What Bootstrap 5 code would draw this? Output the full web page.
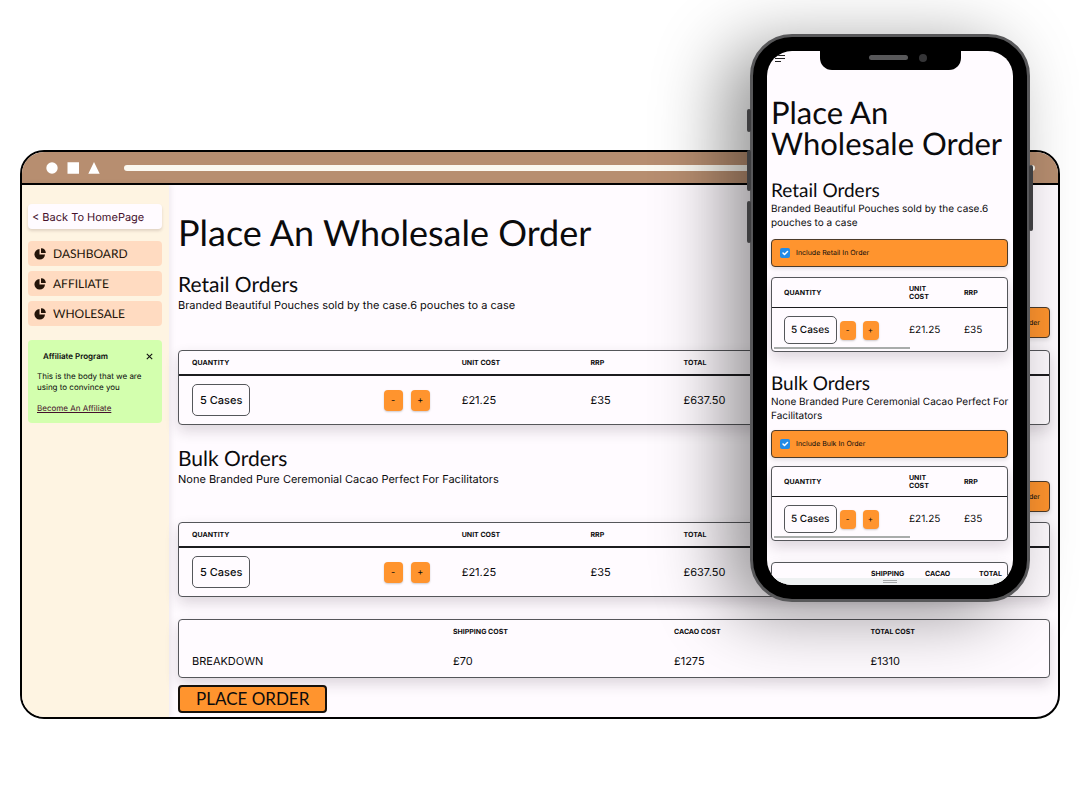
<!DOCTYPE html>
<html lang="en">
<head>
<meta charset="utf-8">
<meta name="viewport" content="width=device-width, initial-scale=1">
<title>Place An Wholesale Order</title>
<link href="https://cdn.jsdelivr.net/npm/bootstrap@5.3.0/dist/css/bootstrap.min.css" rel="stylesheet">
<script src="https://cdn.jsdelivr.net/npm/bootstrap@5.3.0/dist/js/bootstrap.bundle.min.js" defer></script>
<style>
:root{--ink:#0b0b0d;--orange:#ff942e;--paper:#fffbff;--rule:#55565a}
body{background:#fff;color:var(--ink);font-family:Inter,"Liberation Sans",sans-serif;font-size:11px;line-height:16px;text-rendering:geometricPrecision}
.stage{padding:150px 20px 80px;overflow:hidden}
h1,h2,.display-face{font-family:Lato,"Liberation Sans",sans-serif;font-weight:400;margin:0}
button{color:inherit}

/* browser window */
.browser{border:2px solid #000;border-radius:24px;overflow:hidden;background:var(--paper)}
.chrome-bar{background:#b78e70;border-bottom:2px solid #000;height:33px;padding:0 23px 0 24px}
.address{height:6px;border-radius:3px;background:#fbf8f0;margin-left:23px}
.side{width:147px;flex:none;background:#fef4e2;padding:19px 7px 20px 6px;box-shadow:1px 0 6px rgba(60,40,60,.1)}
.side a{color:#24150a;text-decoration:none}
.back{height:25px;padding:0 4px;background:var(--paper);border-radius:4px;box-shadow:0 2px 3px rgba(60,30,30,.15);margin-bottom:12px}
.side .back,.side .join{color:#45102c}
.menu-list{gap:5px}
.menu-link{height:25px;padding:0 6px;gap:7px;background:#ffdbc1;border-radius:4px;font-size:12px}
.promo{background:#d3ffae;border-radius:4px;margin-top:14px;padding:11px 9px 9px;font-size:8px;line-height:11px}
.promo-head{padding-left:6px;margin-bottom:9px}
.promo p{margin-bottom:10px}
.side .join{text-decoration:underline}
.close-x{border:0;background:none;padding:0;line-height:0}
.work{padding:29px 8px 4px 9px;min-width:0}
.work h1{font-size:36px;line-height:36px;margin-bottom:23px}
h2{font-size:21px;line-height:24px}
.include{background:var(--orange);border:1px solid #4b3b2b;border-radius:4px;font-size:7px;line-height:10px;height:31px;padding:0 9px 0 8px;gap:6px;box-shadow:0 2px 4px rgba(0,0,0,.12)}
.include .form-check-input{width:10px;height:10px;margin:0;border:0;border-radius:2px}
.include .form-check-input:checked{background-color:#228be6}
.work .include{margin-top:34px;margin-bottom:10px}

/* tables */
.sheet{border:1px solid var(--rule);border-radius:4px;background:var(--paper);box-shadow:0 6px 14px rgba(40,20,40,.16);overflow:hidden}
.sheet table{width:100%;table-layout:fixed;margin:0}
.sheet th,.sheet td{padding:0 0 0 13px;vertical-align:middle}
.sheet th{font-size:7px;line-height:8px;font-weight:700;height:24px}
.sheet td{height:49px}
.ruled thead th{border-bottom:2px solid #1c1c1f}
.c-qty{width:31%}.c-unit{width:14.8%}.c-rrp{width:10.7%}
.cases{border:1px solid var(--rule);border-radius:5px;padding:7px;font-weight:500;line-height:16px}
.step{border:0;border-radius:4px;background:var(--orange);width:19px;height:21px;padding:0;font-size:9px;line-height:20px;box-shadow:0 1px 2px rgba(0,0,0,.2)}
.steps{gap:8px;margin-right:19px}
.costs th{height:24px}.costs td{height:33px}
.c-name{width:30%}.c-ship{width:25.4%}.c-cacao{width:22.6%}
.place{border:2px solid #17110b;border-radius:4px;background:var(--orange);font-size:17px;line-height:24px;padding:0 16px;margin-top:7px}

/* phone lying over the window */
.phone{position:absolute;top:34px;right:50px;width:280px;border:3px solid #58585a;border-radius:42px;background:#000;padding:14px;box-shadow:-25px 12px 70px rgba(0,0,0,.42)}
.key{position:absolute;width:4px;background:#3e3e40;border-radius:2px}
.screen{position:relative;background:var(--paper);height:534px;border-radius:25px;overflow:hidden;padding:0 5px 0 4px;font-size:10px;line-height:14px}
.notch{position:absolute;top:-1px;left:53px;right:52px;height:20px;background:#000;border-radius:0 0 12px 12px;gap:11px;padding:0 7px 5px 21px}
.speaker{width:39px;height:5px;border-radius:3px;background:#58585a}
.lens{width:8px;height:8px;border-radius:50%;background:#353537}
.burger{position:absolute;top:3px;left:7px;border:0;background:none;padding:0;line-height:0}
.screen h1{font-size:31px;line-height:31px;padding-top:46px;margin-bottom:20px;white-space:nowrap}
.screen h2{font-size:19px;line-height:23px}
.screen .include{height:28px;margin:9px 0 10px}
.screen .include.snug{margin:7px 0 8px}
.screen .sheet{position:relative}
.screen .sheet th{height:29px;padding:2px 0 0 12px}
.screen .sheet td{height:44px;padding:2px 0 0 12px}
.screen .ruled th{border-bottom-width:1px}
.screen .m-costs th{height:20px}
.m-qty{width:125px}.m-unit{width:55px}
.m-name{width:37%}.m-part{width:23%}
.screen .cases{padding:6px;line-height:14px}
.screen .steps{margin-left:3px;gap:7px}
.screen .step{width:16px;height:19px;font-size:8px;line-height:18px}
.scroll-thumb{position:absolute;left:2px;bottom:2px;width:58%;height:2px;background:#a9acab}
.home-strip{position:absolute;left:0;right:0;bottom:0;height:7px;background:#eef1f2}
.home-strip span{width:14px;height:3px;border:solid #a4a7a8;border-width:1px 0}
</style>
</head>
<body>
<div class="stage position-relative">
  <div class="browser">
    <div class="chrome-bar d-flex align-items-center">
      <svg width="55" height="12" viewBox="0 0 55 12" fill="#fff" aria-hidden="true"><circle cx="6" cy="6" r="5.700"/><path d="M21.500.3H33v11.500H21.500zM48 0l5.700 11.700H42.300z"/></svg>
      <div class="address flex-grow-1"></div>
    </div>
    <div class="d-flex">
      <nav class="side">
        <a href="#" class="back d-flex align-items-center">&lt; Back To HomePage</a>
        <div class="menu-list d-grid">
          <a href="#" class="menu-link display-face d-flex align-items-center"><svg width="12" height="12" viewBox="0 0 12 12" fill="#24150a" aria-hidden="true"><path d="M5.500 1v5.500H11A5.300 5.300 0 1 1 5.500 1z"/><path d="M7 .2A5 5 0 0 1 11.800 5H7z"/></svg>DASHBOARD</a>
          <a href="#" class="menu-link display-face d-flex align-items-center"><svg width="12" height="12" viewBox="0 0 12 12" fill="#24150a" aria-hidden="true"><path d="M5.500 1v5.500H11A5.300 5.300 0 1 1 5.500 1z"/><path d="M7 .2A5 5 0 0 1 11.800 5H7z"/></svg>AFFILIATE</a>
          <a href="#" class="menu-link display-face d-flex align-items-center"><svg width="12" height="12" viewBox="0 0 12 12" fill="#24150a" aria-hidden="true"><path d="M5.500 1v5.500H11A5.300 5.300 0 1 1 5.500 1z"/><path d="M7 .2A5 5 0 0 1 11.800 5H7z"/></svg>WHOLESALE</a>
        </div>
        <div class="promo">
          <div class="promo-head d-flex justify-content-between align-items-center"><span class="fw-semibold">Affiliate Program</span><button class="close-x" type="button" aria-label="Close"><svg width="7" height="7" viewBox="0 0 7 7" stroke="#111" stroke-width="1.100"><path d="M.8.800l5.400 5.400M6.200.800L.8 6.200"/></svg></button></div>
          <p>This is the body that we are using to convince you</p>
          <a href="#" class="join">Become An Affiliate</a>
        </div>
      </nav>
      <main class="work flex-grow-1">
        <h1>Place An Wholesale Order</h1>
        <section>
          <div class="d-flex justify-content-between">
            <div><h2>Retail Orders</h2><p class="mb-0">Branded Beautiful Pouches sold by the case.6 pouches to a case</p></div>
            <label class="include d-flex align-items-center"><input class="form-check-input" type="checkbox" checked>Include Retail In Order</label>
          </div>
          <div class="sheet ruled" style="margin-top:2px">
            <table>
              <thead><tr><th class="c-qty">QUANTITY</th><th class="c-unit">UNIT COST</th><th class="c-rrp">RRP</th><th>TOTAL</th></tr></thead>
              <tbody><tr><td><div class="d-flex align-items-center"><span class="cases">5 Cases</span><div class="steps d-flex ms-auto"><button type="button" class="step">-</button><button type="button" class="step">+</button></div></div></td><td>£21.25</td><td>£35</td><td>£637.50</td></tr></tbody>
            </table>
          </div>
        </section>
        <section style="margin-top:22px">
          <div class="d-flex justify-content-between">
            <div><h2>Bulk Orders</h2><p class="mb-0">None Branded Pure Ceremonial Cacao Perfect For Facilitators</p></div>
            <label class="include d-flex align-items-center"><input class="form-check-input" type="checkbox" checked>Include Bulk In Order</label>
          </div>
          <div class="sheet ruled">
            <table>
              <thead><tr><th class="c-qty">QUANTITY</th><th class="c-unit">UNIT COST</th><th class="c-rrp">RRP</th><th>TOTAL</th></tr></thead>
              <tbody><tr><td><div class="d-flex align-items-center"><span class="cases">5 Cases</span><div class="steps d-flex ms-auto"><button type="button" class="step">-</button><button type="button" class="step">+</button></div></div></td><td>£21.25</td><td>£35</td><td>£637.50</td></tr></tbody>
            </table>
          </div>
        </section>
        <div class="sheet costs" style="margin-top:22px">
          <table>
            <thead><tr><th class="c-name"></th><th class="c-ship">SHIPPING COST</th><th class="c-cacao">CACAO COST</th><th>TOTAL COST</th></tr></thead>
            <tbody><tr><td>BREAKDOWN</td><td>£70</td><td>£1275</td><td>£1310</td></tr></tbody>
          </table>
        </div>
        <button type="button" class="place display-face d-block">PLACE ORDER</button>
      </main>
    </div>
  </div>

  <div class="phone">
    <i class="key" style="left:-6px;top:72px;height:23px"></i>
    <i class="key" style="left:-6px;top:113px;height:41px"></i>
    <i class="key" style="left:-6px;top:164px;height:42px"></i>
    <i class="key" style="right:-6px;top:128px;height:66px"></i>
    <div class="screen">
      <button class="burger" type="button" aria-label="Menu"><svg width="12" height="10" viewBox="0 0 12 10" stroke="#222" stroke-width="1"><path d="M1 1.500h10M1 4.500h10M1 7.500h6"/></svg></button>
      <div class="notch d-flex align-items-center justify-content-center"><span class="speaker"></span><span class="lens"></span></div>
      <h1>Place An<br>Wholesale Order</h1>
      <section>
        <h2>Retail Orders</h2>
        <p class="mb-0">Branded Beautiful Pouches sold by the case.6 pouches to a case</p>
        <label class="include d-flex align-items-center"><input class="form-check-input" type="checkbox" checked>Include Retail In Order</label>
        <div class="sheet ruled">
          <table>
            <thead><tr><th class="m-qty">QUANTITY</th><th class="m-unit">UNIT<br>COST</th><th>RRP</th></tr></thead>
            <tbody><tr><td><div class="d-flex align-items-center"><span class="cases text-nowrap">5 Cases</span><div class="steps d-flex"><button type="button" class="step">-</button><button type="button" class="step">+</button></div></div></td><td>£21.25</td><td>£35</td></tr></tbody>
          </table>
          <span class="scroll-thumb"></span>
        </div>
      </section>
      <section style="margin-top:20px">
        <h2>Bulk Orders</h2>
        <p class="mb-0 text-nowrap">None Branded Pure Ceremonial Cacao Perfect For<br>Facilitators</p>
        <label class="include snug d-flex align-items-center"><input class="form-check-input" type="checkbox" checked>Include Bulk In Order</label>
        <div class="sheet ruled">
          <table>
            <thead><tr><th class="m-qty">QUANTITY</th><th class="m-unit">UNIT<br>COST</th><th>RRP</th></tr></thead>
            <tbody><tr><td><div class="d-flex align-items-center"><span class="cases text-nowrap">5 Cases</span><div class="steps d-flex"><button type="button" class="step">-</button><button type="button" class="step">+</button></div></div></td><td>£21.25</td><td>£35</td></tr></tbody>
          </table>
          <span class="scroll-thumb"></span>
        </div>
      </section>
      <div class="sheet m-costs" style="margin-top:21px">
        <table><thead><tr><th class="m-name"></th><th class="m-part">SHIPPING</th><th class="m-part">CACAO</th><th>TOTAL</th></tr></thead></table>
      </div>
      <div class="home-strip d-flex justify-content-center align-items-center"><span></span></div>
    </div>
  </div>
</div>
</body>
</html>
